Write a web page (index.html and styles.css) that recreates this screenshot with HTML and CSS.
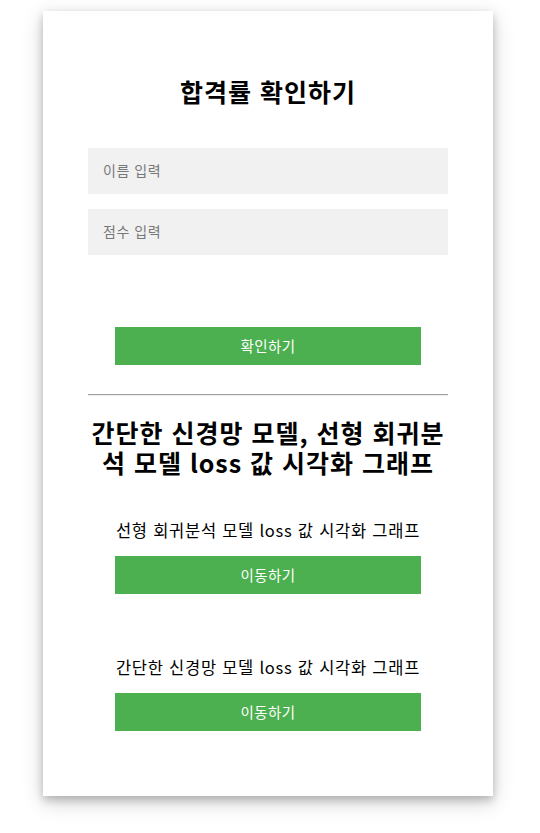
FILE: index.html
```html
<!DOCTYPE html>
<html lang="ko">
<head>
<meta charset="utf-8">
<title>합격률 확인하기</title>
<link rel="stylesheet" href="styles.css">
</head>
<body>
<div class="card">
  <h1 class="title">합격률 확인하기</h1>
  <form class="form">
    <input class="field" type="text" placeholder="이름 입력">
    <input class="field" type="text" placeholder="점수 입력">
    <button class="btn btn-submit" type="button">확인하기</button>
  </form>
  <hr class="divider">
  <h2 class="subtitle">간단한 신경망 모델, 선형 회귀분석 모델 loss 값 시각화 그래프</h2>
  <p class="link-label first">선형 회귀분석 모델 loss 값 시각화 그래프</p>
  <button class="btn" type="button">이동하기</button>
  <p class="link-label second">간단한 신경망 모델 loss 값 시각화 그래프</p>
  <button class="btn" type="button">이동하기</button>
</div>
</body>
</html>
```
FILE: styles.css
```css
html, body {
  margin: 0;
  padding: 0;
  background: #fff;
}
body {
  font-family: "Noto Sans CJK KR", "Noto Sans", sans-serif;
  color: #000;
  min-height: 833px;
}
.card {
  width: 450px;
  box-sizing: border-box;
  margin: 11px 0 37px 43px;
  padding: 64px 45px 65px;
  background: #fff;
  box-shadow: 0 4px 8px 0 rgba(0,0,0,0.2), 0 6px 20px 0 rgba(0,0,0,0.19);
  display: flex;
  flex-direction: column;
  align-items: center;
}
.title {
  margin: 0;
  font-size: 25px;
  line-height: 32px;
  font-weight: 700;
  letter-spacing: 0.04em;
  text-align: center;
}
.form {
  width: 100%;
  display: flex;
  flex-direction: column;
  align-items: center;
  gap: 15px;
  margin-top: 41px;
}
.field {
  width: 100%;
  height: 46px;
  box-sizing: border-box;
  border: none;
  background: #f1f1f1;
  padding: 0 15px 2px;
  font-family: inherit;
  font-size: 14px;
  letter-spacing: 0.04em;
  color: #000;
  outline: none;
}
.field::placeholder {
  color: #777;
}
.btn {
  width: 306px;
  height: 38px;
  border: none;
  background: #4caf50;
  color: #fff;
  font-family: inherit;
  font-size: 14.5px;
  letter-spacing: 0.03em;
  padding: 0 0 2px;
  cursor: pointer;
}
.btn-submit {
  margin-top: 57px;
}
.divider {
  width: 100%;
  margin: 29px 0 0;
  height: 0;
  border: none;
  border-top: 1px solid #a0a0a0;
  border-bottom: 1px solid #ececec;
}
.subtitle {
  margin: 21px 0 0;
  font-size: 25px;
  line-height: 30px;
  font-weight: 700;
  letter-spacing: 0.04em;
  text-align: center;
}
.link-label {
  margin: 0 0 14px;
  font-size: 16.5px;
  line-height: 24px;
  letter-spacing: 0.045em;
  text-align: center;
}
.link-label.first {
  margin-top: 41px;
}
.link-label.second {
  margin-top: 61px;
}
```
